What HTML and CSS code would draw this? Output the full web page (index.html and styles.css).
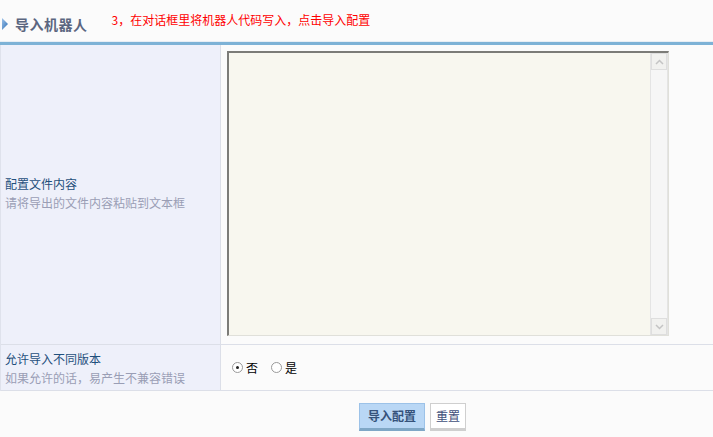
FILE: index.html
```html
<!DOCTYPE html>
<html>
<head>
<meta charset="utf-8">
<link rel="stylesheet" href="styles.css">
</head>
<body>
<div class="page">
  <div class="header">
    <div class="title">
      <svg class="arrow" width="8" height="14" viewBox="0 0 8 14"><defs><linearGradient id="g" x1="0" y1="0" x2="1" y2="1"><stop offset="0" stop-color="#9ec3ea"/><stop offset="1" stop-color="#2f6fb3"/></linearGradient></defs><polygon points="1,1 7,7 1,13" fill="url(#g)"/></svg>
      <span class="title-text">导入机器人</span>
    </div>
    <span class="hint">3，在对话框里将机器人代码写入，点击导入配置</span>
  </div>
  <div class="form">
    <div class="row row-big">
      <div class="label">
        <div class="name">配置文件内容</div>
        <div class="desc">请将导出的文件内容粘贴到文本框</div>
      </div>
      <div class="field">
        <div class="textarea">
          <div class="scroll">
            <div class="sbtn"><svg width="9" height="6" viewBox="0 0 9 6"><polyline points="1,5 4.5,1.5 8,5" fill="none" stroke="#c4c4c4" stroke-width="1.5"/></svg></div>
            <div class="strack"></div>
            <div class="sbtn"><svg width="9" height="6" viewBox="0 0 9 6"><polyline points="1,1 4.5,4.5 8,1" fill="none" stroke="#c4c4c4" stroke-width="1.5"/></svg></div>
          </div>
        </div>
      </div>
    </div>
    <div class="row row-small">
      <div class="label">
        <div class="name">允许导入不同版本</div>
        <div class="desc">如果允许的话，易产生不兼容错误</div>
      </div>
      <div class="field radios">
        <span class="radio on"></span><span class="rlabel">否</span>
        <span class="radio"></span><span class="rlabel">是</span>
      </div>
    </div>
  </div>
  <div class="actions">
    <span class="btn primary">导入配置</span>
    <span class="btn reset">重置</span>
  </div>
</div>
</body>
</html>
```

FILE: styles.css
```css
html, body { margin: 0; padding: 0; background: #fbfbfb; }
body { font-family: "SimSun", "Noto Sans CJK SC", sans-serif; font-size: 12px; }
.page { width: 713px; height: 437px; overflow: hidden; }
.header { height: 42px; display: flex; align-items: flex-end; border-bottom: 3px solid #7db2d6; box-shadow: 0 -1px 0 #e8eef4 inset; background: #fbfbfb; }
.title { display: flex; align-items: center; padding-left: 1px; padding-bottom: 8px; }
.arrow { margin-right: 6px; }
.title-text { font-size: 14px; font-weight: bold; color: #5b6680; letter-spacing: 0.5px; }
.hint { color: #ff0000; font-size: 12px; margin-left: 24px; padding-bottom: 14px; }
.form { border-left: 1px solid #dfe2ec; }
.row { display: grid; grid-template-columns: 220px 1fr; border-bottom: 1px solid #dcdfe8; }
.row-big { height: 299px; }
.row-small { height: 45px; }
.label { background: #eef0fa; border-right: 1px solid #dcdfe8; display: flex; flex-direction: column; justify-content: center; padding-left: 4px; }
.row-big .label { padding-bottom: 4px; }
.name { color: #1f4f7c; line-height: 19px; }
.desc { color: #9a9eb5; line-height: 19px; }
.field { background: #fbfbfb; }
.row-big .field { padding: 6px 0 0 6px; }
.textarea { width: 439px; height: 282px; background: #f8f7ef; border-top: 2px solid #7c7c78; border-left: 2px solid #7c7c78; border-right: 1px solid #e0e0da; border-bottom: 1px solid #e0e0da; display: flex; justify-content: flex-end; }
.scroll { width: 16px; display: flex; flex-direction: column; background: #f6f6f6; border-left: 1px solid #e4e4e4; border-right: 1px solid #e4e4e4; }
.sbtn { height: 15px; background: #f1f1ef; border: 1px solid #dedede; display: flex; align-items: center; justify-content: center; }
.strack { flex: 1; }
.radios { display: flex; align-items: center; padding-left: 11px; }
.radio { width: 11px; height: 11px; border-radius: 50%; border: 1px solid #9a9a9a; background: #fff; box-sizing: border-box; position: relative; margin-right: 3px; }
.radio.on::after { content: ""; position: absolute; left: 3px; top: 3px; width: 3px; height: 3px; border-radius: 50%; background: #222; }
.rlabel { color: #000; margin-right: 13px; }
.actions { display: flex; justify-content: center; gap: 5px; padding-top: 12px; padding-left: 112px; }
.btn { height: 24px; line-height: 24px; padding: 0 7px; border: 1px solid #cfcfcf; border-bottom: 3px solid #cfcfcf; background: #fff; color: #40507a; }
.btn.reset { padding: 0 5px; }
.btn.primary { background: #b9d7f5; border-color: #9cc2e8; border-bottom-color: #7fa7c6; font-weight: bold; color: #35527a; padding: 0 8px; }
```
